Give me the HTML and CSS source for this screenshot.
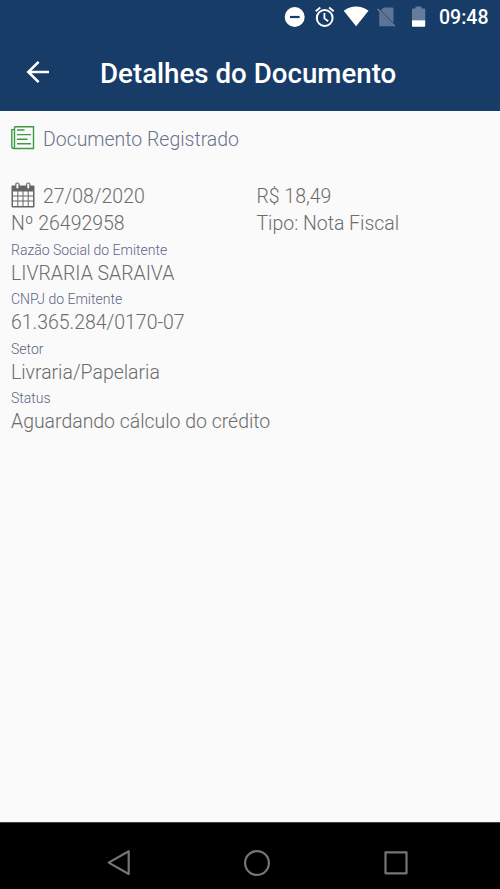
FILE: index.html
```html
<!DOCTYPE html>
<html lang="pt-BR">
<head>
    <meta charset="UTF-8">
    <meta name="viewport" content="width=device-width, initial-scale=1.0">
    <title>Detalhes do Documento</title>
    <link rel="stylesheet" href="styles.css">
</head>
<body>
    <header class="header">
        <div class="status-bar">
            <svg class="status-icons" width="150" height="34" viewBox="280 0 150 34">
                <!-- do not disturb -->
                <circle cx="294.7" cy="17" r="10" fill="#fff"/>
                <path d="M290 17h9.6" stroke="#183c68" stroke-width="2.2"/>
                <!-- alarm -->
                <circle cx="324.7" cy="18" r="7.9" fill="none" stroke="#fff" stroke-width="2"/>
                <path d="M324.4 13v5.4l3.8 2.8M315.7 11.3l4.6-3.8M329.1 7.5l4.6 3.8" fill="none" stroke="#fff" stroke-width="1.8"/>
                <!-- wifi -->
                <path d="M343.7 10.8Q356.1 2.4 368.5 10.8L356.1 26.2Z" fill="#fff"/>
                <!-- no sim -->
                <path d="M380.8 10.2L383.8 7.5H392.3Q393.5 7.5 393.5 8.7V22.9ZM379.2 11.9L393 25.7Q392.7 26.2 392 26.2H380.4Q379.2 26.2 379.2 25Z" fill="#5d7697"/>
                <path d="M377.6 9L394.8 26.2" stroke="#6f849f" stroke-width="1.5"/>
                <!-- battery -->
                <path d="M412 20.3V9.3Q412 8.5 412.8 8.5H415.5V6.5H421.5V8.5H424.4Q425.2 8.5 425.2 9.3V20.3Z" fill="#657d9c"/>
                <path d="M412 20.3H425.2V26Q425.2 26.8 424.4 26.8H412.8Q412 26.8 412 26Z" fill="#fff"/>
            </svg>
            <span class="clock">09:48</span>
        </div>
        <div class="title-bar">
            <svg class="back" width="24" height="24" viewBox="0 0 24 24">
                <path d="M12.6 1.8L2.3 12L12.6 22.2M2.3 12H23" fill="none" stroke="#fff" stroke-width="2.6"/>
            </svg>
            <h1>Detalhes do Documento</h1>
        </div>
    </header>

    <main class="content">
        <div class="registered">
            <svg width="24" height="24" viewBox="0 0 24 24">
                <path d="M3.5 .8H22.5V22.5H2.6Q.8 22.5 .8 20.7V3.6H3.5M3.5 .8V20.5Q3.5 22.3 2.3 22.4" fill="none" stroke="#3d9a42" stroke-width="1.4"/>
                <path d="M6 4h7.5M6 8.6h14M6 13.2h10.5M6 17.7h14" stroke="#3d9a42" stroke-width="1.4"/>
            </svg>
            <span>Documento Registrado</span>
        </div>

        <div class="summary">
            <div class="date">
                <svg width="24" height="26" viewBox="0 0 24 26">
                    <path d="M1.5 3.5H22.5Q23.5 3.5 23.5 4.5V24.5Q23.5 25.5 22.5 25.5H1.5Q.5 25.5 .5 24.5V4.5Q.5 3.5 1.5 3.5Z" fill="#666"/>
                    <path d="M2 9.5h4.3v4H2zM7.3 9.5h4.2v4H7.3zM12.5 9.5h4.2v4h-4.2zM17.7 9.5H22v4h-4.3zM2 14.5h4.3v4H2zM7.3 14.5h4.2v4H7.3zM12.5 14.5h4.2v4h-4.2zM17.7 14.5H22v4h-4.3zM2 19.5h4.3V24H2zM7.3 19.5h4.2V24H7.3zM12.5 19.5h4.2V24h-4.2zM17.7 19.5H22V24h-4.3z" fill="#fafafa"/>
                    <rect x="4.8" y="1" width="3.2" height="6" rx="1.5" fill="#fafafa" stroke="#666" stroke-width="1.2"/>
                    <rect x="15.7" y="1" width="3.2" height="6" rx="1.5" fill="#fafafa" stroke="#666" stroke-width="1.2"/>
                </svg>
                <span>27/08/2020</span>
            </div>
            <span>R$ 18,49</span>
            <span>Nº 26492958</span>
            <span>Tipo: Nota Fiscal</span>
        </div>

        <dl class="details">
            <dt>Razão Social do Emitente</dt>
            <dd>LIVRARIA SARAIVA</dd>
            <dt>CNPJ do Emitente</dt>
            <dd>61.365.284/0170-07</dd>
            <dt>Setor</dt>
            <dd>Livraria/Papelaria</dd>
            <dt>Status</dt>
            <dd>Aguardando cálculo do crédito</dd>
        </dl>
    </main>

    <nav class="nav-bar">
        <svg width="500" height="66" viewBox="0 823 500 66" fill="none" stroke="#757575" stroke-width="2.2" stroke-linejoin="round">
            <path d="M128.7 851.2V874L108.7 862.6Z"/>
            <circle cx="257" cy="863" r="11.9"/>
            <rect x="385.5" y="852.3" width="21" height="21"/>
        </svg>
    </nav>
</body>
</html>
```

FILE: styles.css
```css
body {
    margin: 0;
    height: 889px;
    display: flex;
    flex-direction: column;
    font-family: Roboto, sans-serif;
    background-color: #fafafa;
    overflow: hidden;
}
.header {
    height: 111px;
    background-color: #183c68;
    color: #fff;
}
.status-bar {
    display: flex;
    height: 34px;
    padding-left: 280px;
}
.clock {
    margin-left: 9px;
    font-size: 19.5px;
    font-weight: 500;
    line-height: 35px;
}
.title-bar {
    display: flex;
    align-items: center;
    height: 77px;
    padding-left: 26px;
}
.back {
    margin-top: -2px;
}
.title-bar h1 {
    margin: 2px 0 0 50px;
    font-size: 27.7px;
    font-weight: 500;
    line-height: 36px;
    white-space: nowrap;
}
.content {
    flex: 1;
    padding: 15px 11px 0;
    font-size: 19.45px;
    font-weight: 300;
    color: #6c6c6c;
}
.registered {
    display: flex;
    gap: 8px;
    height: 24px;
    line-height: 28px;
    color: #6a728c;
}
.summary {
    display: grid;
    grid-template-columns: 245.5px 1fr;
    grid-auto-rows: 27px;
    margin-top: 33px;
    line-height: 28px;
}
.date {
    display: flex;
    gap: 8px;
}
.date svg {
    margin-top: -1px;
}
.details {
    margin: 1.8px 0 0;
}
.details dt {
    height: 22px;
    font-size: 14px;
    line-height: 22.5px;
    color: #5a6488;
}
.details dd {
    height: 27.5px;
    margin: 0;
    line-height: 25px;
}
.nav-bar {
    height: 66px;
    border-top: 1px solid #444;
    background-color: #000;
}
.nav-bar svg {
    display: block;
}
```
